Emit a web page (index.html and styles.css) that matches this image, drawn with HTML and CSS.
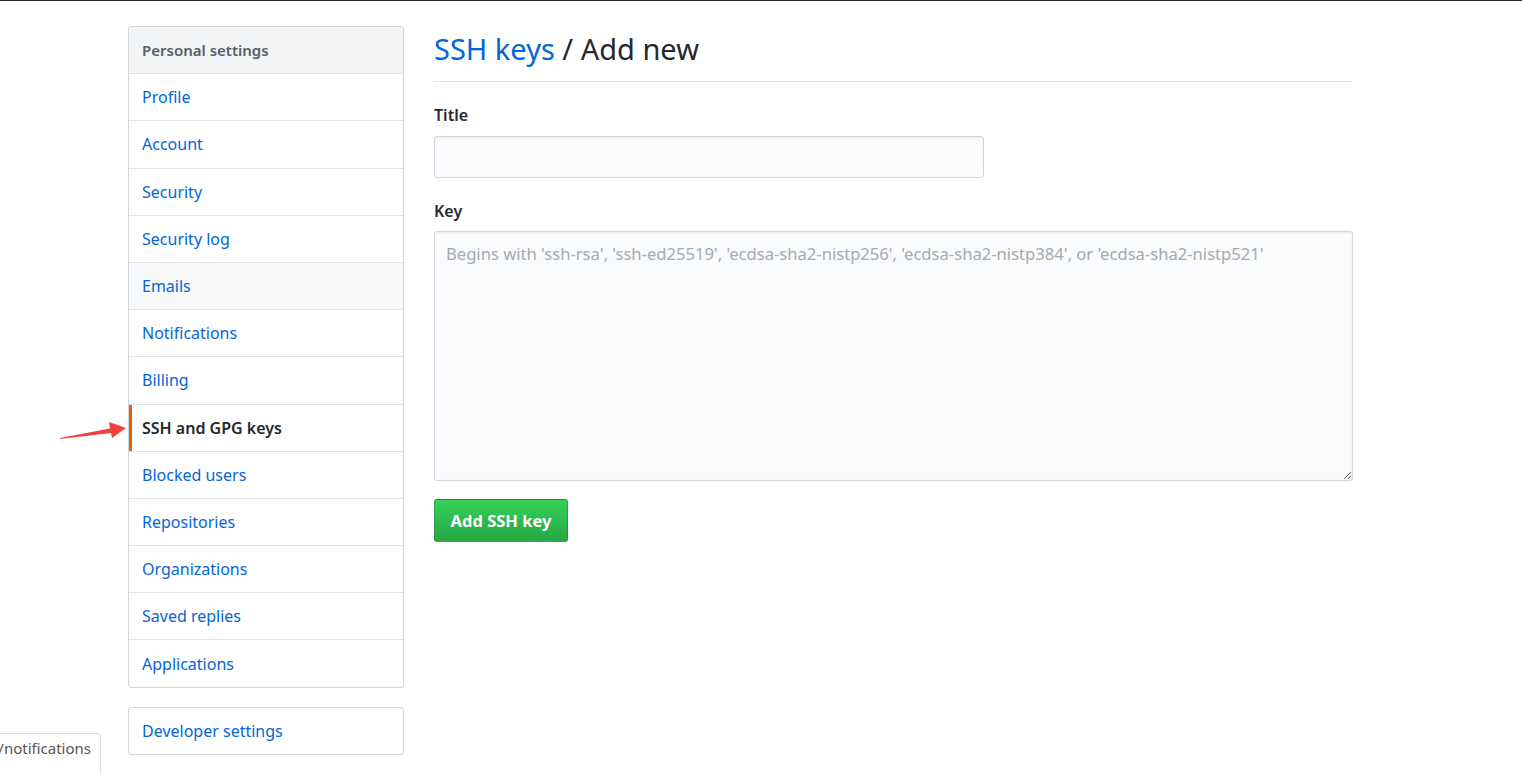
FILE: index.html
```html
<!DOCTYPE html>
<html lang="en">
<head>
    <meta charset="UTF-8">
    <title>Add new SSH key</title>
    <link rel="stylesheet" href="styles.css">
</head>
<body>
    <div class="topline"></div>
    <div class="layout">
        <!-- sidebar -->
        <div class="sidebar">
            <nav class="menu">
                <div class="menu-heading">Personal settings</div>
                <a class="menu-item" href="#">Profile</a>
                <a class="menu-item" href="#">Account</a>
                <a class="menu-item" href="#">Security</a>
                <a class="menu-item" href="#">Security log</a>
                <a class="menu-item hover" href="#">Emails</a>
                <a class="menu-item" href="#">Notifications</a>
                <a class="menu-item" href="#">Billing</a>
                <a class="menu-item selected" href="#">SSH and GPG keys
                    <svg class="arrow" width="72" height="30" viewBox="0 0 72 30">
                        <path d="M2 25 L52 15.5 L51 9 L68 15 L54 25 L53 20 L2 26 Z" fill="#f0403a"/>
                    </svg>
                </a>
                <a class="menu-item" href="#">Blocked users</a>
                <a class="menu-item" href="#">Repositories</a>
                <a class="menu-item" href="#">Organizations</a>
                <a class="menu-item" href="#">Saved replies</a>
                <a class="menu-item" href="#">Applications</a>
            </nav>
            <nav class="menu">
                <a class="menu-item" href="#">Developer settings</a>
            </nav>
        </div>

        <!-- main -->
        <div class="main">
            <h2 class="subhead"><a href="#">SSH keys</a> / Add new</h2>
            <form>
                <label class="field-label" for="title">Title</label>
                <input class="form-control title-input" type="text" id="title">
                <label class="field-label" for="key">Key</label>
                <textarea class="form-control key-input" id="key" placeholder="Begins with 'ssh-rsa', 'ssh-ed25519', 'ecdsa-sha2-nistp256', 'ecdsa-sha2-nistp384', or 'ecdsa-sha2-nistp521'"></textarea>
                <button class="btn-primary" type="button">Add SSH key</button>
            </form>
        </div>
    </div>

    <div class="status-bubble">/notifications</div>
</body>
</html>
```

FILE: styles.css
```css
/* global */
html, body {
    margin: 0;
    padding: 0;
    background: #fff;
    color: #24292e;
    font-family: "Noto Sans", "Open Sans", Arial, sans-serif;
    font-size: 16px;
}

a {
    color: #0366d6;
    text-decoration: none;
}

.topline {
    height: 1px;
    background: #24292e;
}

.layout {
    display: flex;
    gap: 30px;
    padding: 25px 0 0 128px;
}

/* sidebar */
.sidebar {
    width: 276px;
    display: flex;
    flex-direction: column;
    gap: 19px;
}

.menu {
    display: flex;
    flex-direction: column;
    border: 1px solid #d1d5da;
    border-radius: 3px;
}

.menu-heading,
.menu-item {
    height: 46.2px;
    display: flex;
    align-items: center;
    padding: 0 13px;
    border-bottom: 1px solid #e1e4e8;
    position: relative;
}

.menu-item:last-child {
    border-bottom: 0;
}

.menu-heading {
    background: #f3f4f6;
    color: #586069;
    font-weight: 600;
    font-size: 15px;
    border-radius: 3px 3px 0 0;
}

.menu-item.hover {
    background: #f6f8fa;
}

.menu-item.selected {
    color: #24292e;
    font-weight: 600;
}

.menu-item.selected::before {
    content: "";
    position: absolute;
    left: 0;
    top: 0;
    bottom: 0;
    width: 3px;
    background: #e36209;
}

.arrow {
    position: absolute;
    left: -71px;
    top: 8px;
}

/* main */
.main {
    width: 918px;
}

.subhead {
    margin: 0;
    padding: 3px 0 12px;
    line-height: 40px;
    font-size: 29px;
    font-weight: 400;
    border-bottom: 1px solid #e1e4e8;
}

.field-label {
    display: block;
    font-weight: 600;
    line-height: 22px;
    margin: 22px 0 10px;
}

.form-control {
    display: block;
    box-sizing: border-box;
    background: #fafbfc;
    border: 1px solid #d1d5da;
    border-radius: 3px;
    box-shadow: inset 0 1px 2px rgba(27, 31, 35, 0.075);
    font-family: inherit;
    font-size: 16px;
    color: #24292e;
}

.title-input {
    width: 550px;
    height: 42px;
}

.key-input {
    width: 919px;
    height: 250px;
    margin-top: -1px;
    padding: 10px 11px;
    font-size: 16.6px;
    resize: vertical;
}

.key-input::placeholder {
    color: #a3aab1;
}

.btn-primary {
    margin-top: 18px;
    width: 134px;
    height: 43px;
    border: 1px solid rgba(27, 31, 35, 0.2);
    border-radius: 3px;
    background: linear-gradient(#34d058, #28a745);
    color: #fff;
    font-family: inherit;
    font-size: 16.5px;
    font-weight: 700;
}

/* status bubble */
.status-bubble {
    position: fixed;
    left: -7px;
    bottom: 0;
    width: 97px;
    padding: 4px 9px 15px 0;
    text-align: right;
    background: #fff;
    border: 1px solid #dadce0;
    border-bottom: 0;
    border-radius: 0 4px 0 0;
    color: #555;
    font-size: 15px;
}
```
